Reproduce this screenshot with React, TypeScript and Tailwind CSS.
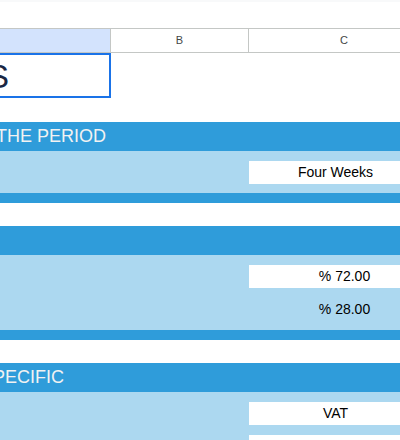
type Row = { text: string; box: boolean; num?: boolean };

const sections: { title: string; offset: string; rows: Row[] }[] = [
  { title: "THE PERIOD", offset: "-ml-[4px]", rows: [{ text: "Four Weeks", box: true }] },
  {
    title: "",
    offset: "",
    rows: [
      { text: "% 72.00", box: true, num: true },
      { text: "% 28.00", box: false, num: true },
    ],
  },
  {
    title: "PECIFIC",
    offset: "-ml-[7px]",
    rows: [
      { text: "VAT", box: true },
      { text: "", box: true },
    ],
  },
];

function Section({ title, offset, rows }: { title: string; offset: string; rows: Row[] }) {
  return (
    <div>
      {/* band header */}
      <div className="h-[29px] bg-[#2f9cda] flex items-center">
        <span className={`${offset} whitespace-nowrap text-[18px] text-[#f2f2f2]`}>{title}</span>
      </div>
      <div className="bg-[#acd8f0] pt-[10px] pb-[9px] flex flex-col gap-[10px]">
        {rows.map((r, i) => (
          <div key={i} className="h-[23px] pl-[249px] flex">
            <div
              className={`w-[173px] shrink-0 h-full flex items-center justify-center text-[14px] text-black ${
                r.box ? "bg-white" : ""
              } ${r.num ? "pl-[18px]" : ""}`}
            >
              {r.text}
            </div>
          </div>
        ))}
      </div>
      <div className="h-[10px] bg-[#2f9cda]" />
      <div className="h-[23px] bg-white" />
    </div>
  );
}

export default function App() {
  return (
    <div className="w-[400px] h-[440px] overflow-hidden bg-white font-['Liberation_Sans',Arial,sans-serif]">
      <div className="h-[2px] bg-[#f8f9fa]" />
      <div className="h-[26px]" />

      {/* column headers */}
      <div className="h-[25px] flex border-y border-[#c4c7c5] text-[11px] text-[#444746]">
        <div className="w-[111px] shrink-0 bg-[#d3e3fd] border-r border-[#c4c7c5]" />
        <div className="w-[138px] shrink-0 flex items-center justify-center border-r border-[#c4c7c5]">B</div>
        <div className="w-[190px] shrink-0 flex items-center justify-center">C</div>
      </div>

      {/* selected A1 cell */}
      <div className="h-[45px] flex">
        <div className="-ml-[2px] w-[113px] shrink-0 border-2 border-[#1a73e8] flex items-center justify-end pr-[100px] pt-[2px]">
          <span className="whitespace-nowrap text-[33px] leading-none text-[#1a2744]">ASSUMPTIONS</span>
        </div>
      </div>

      <div className="h-[24px]" />

      {sections.map((s, i) => (
        <Section key={i} {...s} />
      ))}
    </div>
  );
}
